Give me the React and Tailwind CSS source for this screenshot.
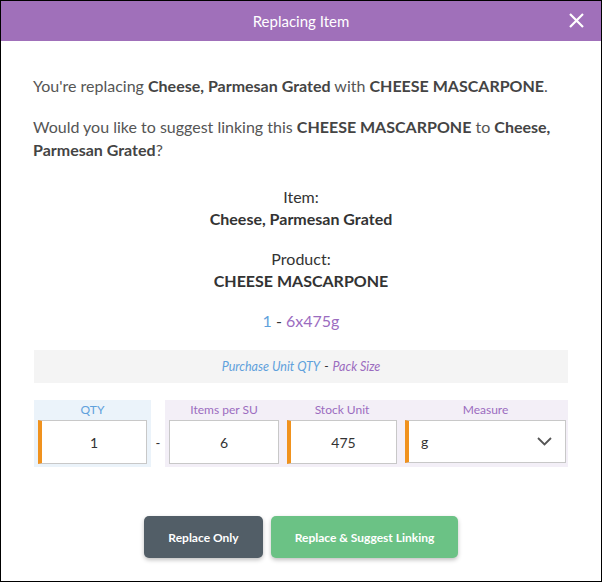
import React from 'react';

const font = { fontFamily: 'Lato, "Open Sans", sans-serif' };

function Field({ value, accent, className = '' }) {
  return (
    <div
      className={`h-[44px] bg-white border border-[#c8c8c8] flex items-center justify-center text-[14px] text-[#333] ${
        accent ? 'border-l-4 border-l-[#f0921e]' : ''
      } ${className}`}
    >
      {value}
    </div>
  );
}

export default function App() {
  return (
    <div className="w-[602px] h-[582px] bg-white border border-black flex flex-col" style={font}>
      <div className="h-[40px] shrink-0 bg-[#a070ba] relative flex items-center justify-center">
        <span className="text-white text-[15px]">Replacing Item</span>
        <button className="absolute right-[16px] top-[11px] text-white">
          <svg width="17" height="17" viewBox="0 0 17 17" fill="none" stroke="white" strokeWidth="2.2">
            <path d="M2 2 L15 15 M15 2 L2 15" />
          </svg>
        </button>
      </div>

      <div className="px-[32px] pt-[33px] text-[16px] text-[#555] leading-[23px]">
        <p>
          You're replacing <b className="font-bold text-[#444]">Cheese, Parmesan Grated</b> with{' '}
          <b className="font-bold text-[#444]">CHEESE MASCARPONE</b>.
        </p>
        <p className="mt-[18px]">
          Would you like to suggest linking this <b className="font-bold text-[#444]">CHEESE MASCARPONE</b> to{' '}
          <b className="font-bold text-[#444]">Cheese, Parmesan Grated</b>?
        </p>

        <div className="mt-[25px] text-center text-[#333] leading-[22px]">
          <div>Item:</div>
          <div className="font-bold">Cheese, Parmesan Grated</div>
          <div className="mt-[18px]">Product:</div>
          <div className="font-bold">CHEESE MASCARPONE</div>
          <div className="mt-[18px]">
            <span className="text-[#5fa1dc]">1</span> - <span className="text-[#9b6cbf]">6x475g</span>
          </div>
        </div>

        <div className="mt-[18px] h-[33px] mx-[1px] bg-[#f4f4f4] flex items-center justify-center text-[12.5px] italic">
          <span className="text-[#5fa1dc]">Purchase Unit QTY</span>
          <span className="text-[#333] mx-[4px]">-</span>
          <span className="text-[#9b6cbf]">Pack Size</span>
        </div>

        <div className="mt-[17px] mx-[1px] flex items-stretch">
          <div className="w-[117px] bg-[#ebf3fa] px-[4px] pb-[3px]">
            <div className="h-[20px] text-[12px] text-[#5fa1dc] text-center leading-[20px]">QTY</div>
            <Field value="1" accent />
          </div>
          <div className="w-[14px] flex items-center justify-center pt-[20px] text-[13px] text-[#333]">-</div>
          <div className="flex-1 bg-[#f3eff7] pl-[4px] pr-[2px] pb-[3px] flex gap-[8px]">
            <div className="w-[110px]">
              <div className="h-[20px] text-[12px] text-[#9b6cbf] text-center leading-[20px]">Items per SU</div>
              <Field value="6" />
            </div>
            <div className="w-[110px]">
              <div className="h-[20px] text-[12px] text-[#9b6cbf] text-center leading-[20px]">Stock Unit</div>
              <Field value="475" accent />
            </div>
            <div className="flex-1">
              <div className="h-[20px] text-[12px] text-[#9b6cbf] text-center leading-[20px]">Measure</div>
              <div className="h-[43px] bg-white border border-[#c8c8c8] border-l-4 border-l-[#f0921e] flex items-center justify-between pl-[12px] pr-[13px] text-[14px] text-[#333]">
                <span>g</span>
                <svg width="15" height="9" viewBox="0 0 15 9" fill="none" stroke="#555" strokeWidth="1.8">
                  <path d="M1 1 L7.5 7.5 L14 1" />
                </svg>
              </div>
            </div>
          </div>
        </div>

        <div className="mt-[49px] flex justify-center gap-[8px]">
          <button className="w-[119px] h-[42px] rounded-[5px] bg-[#525e67] text-white text-[12px] font-bold shadow-[0_2px_4px_rgba(0,0,0,0.25)]">
            Replace Only
          </button>
          <button className="w-[187px] h-[42px] rounded-[5px] bg-[#6bc285] text-white text-[12px] font-bold shadow-[0_2px_4px_rgba(0,0,0,0.25)]">
            Replace &amp; Suggest Linking
          </button>
        </div>
      </div>
    </div>
  );
}
